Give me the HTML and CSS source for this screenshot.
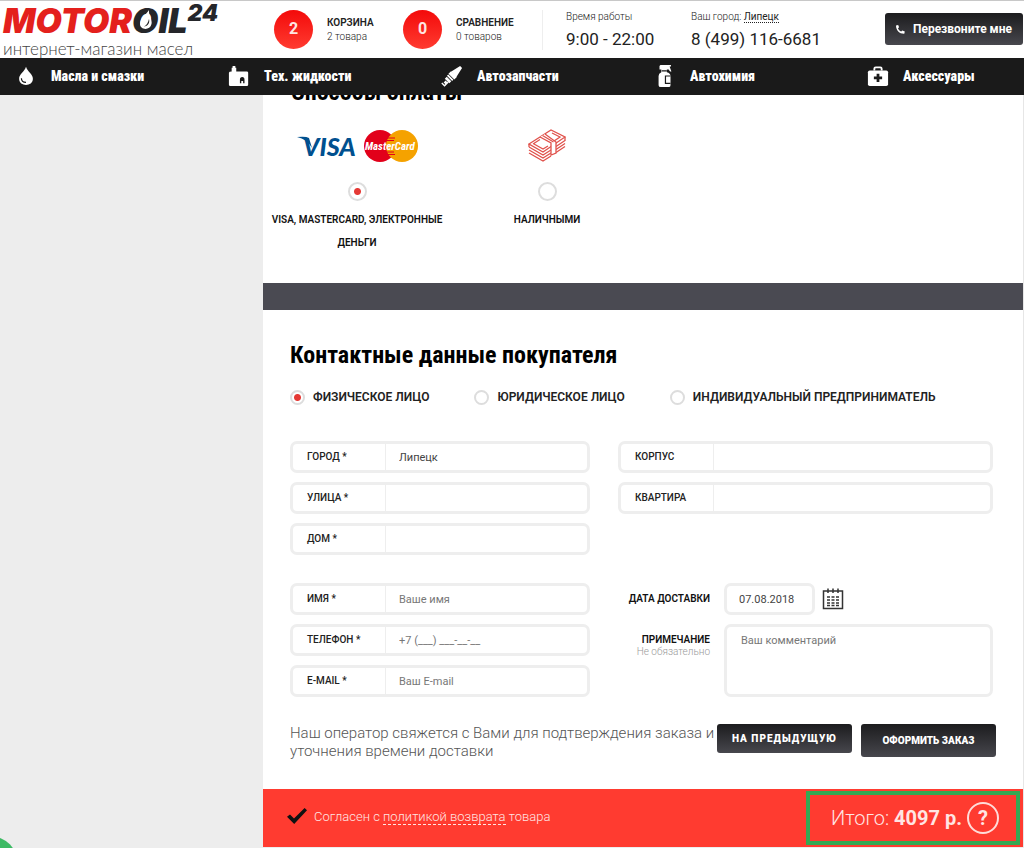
FILE: index.html
```html
<!DOCTYPE html>
<html lang="ru">
<head>
<meta charset="utf-8">
<meta name="viewport" content="width=device-width, initial-scale=1">
<title>MOTOROIL24 — оформление заказа</title>
<link rel="stylesheet" href="styles.css">
</head>
<body>
<header class="header">
  <div class="topbar">
    <a class="logo" href="#">
      <span class="logo-name"><span class="logo-red">MOTOR</span><span class="logo-drop">O<svg viewBox="0 0 14 20" aria-hidden="true"><path d="M10 0C7 5 1 8 1 14c0 6 10 7 11.500 0C13.500 9 9.500 6 10 0z" fill="#fff"/><path d="M10 9c1 4-1 7-5 7.500 3-1.500 4-4 5-7.500z" fill="#222"/></svg></span><span>IL</span><span class="logo-num">24</span></span>
      <span class="logo-tag">интернет-магазин масел</span>
    </a>
    <a class="counter" href="#"><span class="badge">2</span><span class="counter-text"><b>КОРЗИНА</b><small>2 товара</small></span></a>
    <a class="counter" href="#"><span class="badge">0</span><span class="counter-text"><b>СРАВНЕНИЕ</b><small>0 товаров</small></span></a>
    <div class="info info-hours"><small>Время работы</small><span>9:00 - 22:00</span></div>
    <div class="info"><small>Ваш город: <a href="#">Липецк</a></small><span>8 (499) 116-6681</span></div>
    <button class="btn callback" type="button"><svg width="9" height="9" viewBox="0 0 10 10" aria-hidden="true"><path d="M0 .6 2.400 0l1 2.600-1.200 1c.6 1.600 1.800 2.800 3.600 3.700l1.200-1.200L9.800 7.200 9.200 9.800C4 10 0 6 0 .6z" fill="#fff"/></svg>Перезвоните мне</button>
  </div>
  <nav class="nav">
    <a href="#"><svg viewBox="0 0 24 24" aria-hidden="true"><path d="M12 2C10 8 4.500 10 4.500 15c0 9 15 9 15 0C19.500 10 14 8 12 2z" fill="#fff"/><path d="M7 14.500c0 3 2 4.500 5 4.500" fill="none" stroke="#1a1a1a" stroke-width="1.300"/></svg>Масла и смазки</a>
    <a href="#"><svg viewBox="0 0 24 24" aria-hidden="true"><path d="M4 7V3h1V1h3v2h1v4h11.500q1.500 0 1.500 1.500v13q0 1.500-1.500 1.500h-18Q1 23 1 21.500v-13Q1 7 4 7z" fill="#fff"/><path d="M13 20v-4q0-3 2.500-3t2.500 3v4h-1.500v-2.500h-2V20z" fill="#1a1a1a"/></svg>Тех. жидкости</a>
    <a href="#"><svg viewBox="0 0 24 24" aria-hidden="true"><g transform="rotate(45 12 12)" fill="#fff"><path d="M10.500-2h3L16 9H8zM7.500 9h9v4h-9zM8 13.800h8v2H8zM8.500 16.600h7v3h-7zM10.500 20.400h3v3h-3z"/><path d="M13 24.500v-5h1.500V26h-5v-1.500z"/></g></svg>Автозапчасти</a>
    <a href="#"><svg viewBox="0 0 24 24" aria-hidden="true"><path d="M7 0h11.500v1.500H17L19 7h-1.500L16 5h-2v3q4 1 4 4v10q0 2-2 2H7.500q-2.500 0-2.500-2V12q0-3 3-4V5H6V1z" fill="#fff"/><path d="M18 12h-5.500v8H18M8.500 6.500H14" fill="none" stroke="#1a1a1a" stroke-width="1.300"/></svg>Автохимия</a>
    <a href="#"><svg viewBox="0 0 24 24" aria-hidden="true"><path d="M8 6V4q0-1.500 1.500-1.500h5Q16 2.500 16 4v2" fill="none" stroke="#fff" stroke-width="2"/><rect x="1" y="6" width="22" height="17" rx="2" fill="#fff"/><path d="M12 9.500v9M7.500 14h9" stroke="#1a1a1a" stroke-width="3"/></svg>Аксессуары</a>
  </nav>
</header>
<main class="page">
  <form class="checkout">
    <section class="pay">
      <h2>Способы оплаты</h2>
      <div class="pay-list">
        <label class="pay-item">
          <span class="pay-logo">
            <svg width="122" height="36" viewBox="0 0 122 36" role="img" aria-label="Visa, MasterCard">
              <text class="visa" x="7" y="28">VISA</text>
              <path d="M1 9q9-1 12 1l3 10Q11 11 1 9z" fill="#00508f"/>
              <circle cx="84" cy="18" r="16" fill="#e2001a"/><circle cx="106" cy="18" r="16" fill="#f5a200"/>
              <path d="M91 10h8M90 12.500h8M90 24h8M91 26.500h8" stroke="#e2001a"/>
              <text class="mc" x="69" y="22">MasterCard</text>
            </svg>
          </span>
          <input type="radio" name="pay" checked>
          <span>VISA, MASTERCARD, ЭЛЕКТРОННЫЕ ДЕНЬГИ</span>
        </label>
        <label class="pay-item">
          <span class="pay-logo">
            <svg width="38" height="34" viewBox="0 0 38 34" fill="none" stroke="#e0524c" stroke-width="1.300" aria-hidden="true">
              <path d="M1 15 23 1l14 7-22 15z"/><path d="M5 15 12 10.500M20 17l-5 3-9-5M24 4l8 4-6 4"/>
              <path d="m1 18 14 8 8-5M1 21l14 8 8-5M1 24l14 8 8-5M1 15v3M28 17.500l9-6M28 20.500l9-6M28 23.500l9-6M37 8v4"/>
              <path d="m12 8 11 6v12l5-2V13L17 5" fill="#fff"/><path d="m14.500 6.500 11 6.500"/>
            </svg>
          </span>
          <input type="radio" name="pay">
          <span>НАЛИЧНЫМИ</span>
        </label>
      </div>
    </section>
    <section class="buyer">
      <h2>Контактные данные покупателя</h2>
      <div class="types">
        <label><input type="radio" name="type" checked>ФИЗИЧЕСКОЕ ЛИЦО</label>
        <label><input type="radio" name="type">ЮРИДИЧЕСКОЕ ЛИЦО</label>
        <label><input type="radio" name="type">ИНДИВИДУАЛЬНЫЙ ПРЕДПРИНИМАТЕЛЬ</label>
      </div>
      <div class="columns">
        <div class="stack">
          <label class="field"><span>ГОРОД *</span><input type="text" value="Липецк"></label>
          <label class="field"><span>УЛИЦА *</span><input type="text"></label>
          <label class="field"><span>ДОМ *</span><input type="text"></label>
        </div>
        <div class="stack">
          <label class="field"><span>КОРПУС</span><input type="text"></label>
          <label class="field"><span>КВАРТИРА</span><input type="text"></label>
        </div>
        <div class="stack">
          <label class="field"><span>ИМЯ *</span><input type="text" placeholder="Ваше имя"></label>
          <label class="field"><span>ТЕЛЕФОН *</span><input type="tel" placeholder="+7 (___) ___-__-__"></label>
          <label class="field"><span>E-MAIL *</span><input type="email" placeholder="Ваш E-mail"></label>
        </div>
        <div class="delivery">
          <label class="side-label" for="date">ДАТА ДОСТАВКИ</label>
          <div class="date-row">
            <input class="box date" id="date" type="text" value="07.08.2018">
            <button class="calendar" type="button" aria-label="Открыть календарь"><svg width="22" height="22" viewBox="0 0 22 22" fill="none" stroke="#333" aria-hidden="true"><rect x="1.500" y="3" width="19" height="17.500" stroke-width="1.500"/><path d="M6 .5v4.500M11 .5v4.500M16 .5v4.500" stroke-width="1.500"/><path d="M5 9h3M9.500 9h3M14 9h3M5 12h3M9.500 12h3M14 12h3M5 15h3M9.500 15h3M14 15h3M9.500 17.500h3M5 17.500h3M14 17.500h3" stroke-width="1.300"/></svg></button>
          </div>
          <label class="side-label" for="note">ПРИМЕЧАНИЕ<small>Не обязательно</small></label>
          <textarea class="box note" id="note" placeholder="Ваш комментарий"></textarea>
        </div>
      </div>
      <div class="actions">
        <p>Наш оператор свяжется с Вами для подтверждения заказа и уточнения времени доставки</p>
        <button class="btn back" type="button">НА ПРЕДЫДУЩУЮ</button>
        <button class="btn submit" type="submit">ОФОРМИТЬ ЗАКАЗ</button>
      </div>
    </section>
    <footer class="total-bar">
      <div class="agree">
        <input id="agree" type="checkbox" checked>
        <p><label for="agree">Согласен с</label> <a href="#">политикой возврата</a> товара</p>
      </div>
      <div class="total"><span>Итого: <b>4097 р.</b></span><button class="help" type="button">?</button></div>
    </footer>
  </form>
</main>
<button class="chat" type="button" aria-label="Чат"></button>
</body>
</html>
```
FILE: styles.css
```css
* { box-sizing: border-box; }
body { margin: 0; background: #ededed; color: #222; font-family: Roboto, sans-serif; font-size: 12px; }
a { color: inherit; text-decoration: none; }
button, input, textarea { font: inherit; color: inherit; }
button { cursor: pointer; }
h2 { margin: 0; color: #000; font: 700 24px/28px "Roboto Condensed", "Liberation Sans Narrow", Roboto, sans-serif; }

.header { position: sticky; top: 0; z-index: 2; background: #fff; border-top: 1px solid #c8c8c8; }
.topbar { display: grid; grid-template-columns: 271px 129px 139px 149px 1fr auto; height: 57px; padding-left: 3px; align-items: center; }
.logo { display: flex; flex-direction: column; align-self: start; color: #25262a; white-space: nowrap; }
.logo-name { display: flex; height: 38px; font: italic 900 34px/40px Inter, sans-serif; }
.logo-red { color: #e4201c; }
.logo-drop { position: relative; }
.logo-drop svg { position: absolute; left: 7px; top: 9px; width: 14px; height: 20px; }
.logo-num { font-size: 23px; line-height: 24px; }
.logo-tag { color: #444; font: 300 17px/20px Lato, sans-serif; }
.counter { display: flex; align-items: center; gap: 14px; }
.badge { width: 39px; height: 39px; border-radius: 50%; background: linear-gradient(#f30a0a, #ff3b30); color: #ffe5e3; font: 700 16px/37px Roboto, sans-serif; text-align: center; }
.counter-text { display: grid; line-height: 14px; }
.counter-text b { font-size: 10px; font-weight: 600; }
.counter-text small { font-size: 10px; font-weight: 300; }
.counter { margin-top: -1px; }
.info { display: grid; gap: 4px; }
.info small { font-size: 10px; line-height: 14px; font-weight: 300; }
.info small a { font-weight: 400; border-bottom: 1px dotted #222; }
.info span { font-size: 17px; line-height: 22px; }
.info-hours { padding-left: 23px; border-left: 1px solid #eee; margin-right: 24px; }
.btn { border: 0; border-radius: 3px; background: linear-gradient(#1c1c1e, #47474d); color: #fff; font-weight: 900; }
.callback { display: flex; align-items: center; gap: 8px; height: 32px; padding: 0 11px; margin: -2px 1px 0 0; font-size: 12px; font-weight: 700; }
.nav { display: grid; grid-template-columns: repeat(4, 213fr) 172fr; height: 37px; padding-bottom: 1px; background: #1a1a1a; color: #fff; font: 900 14px/36px "Roboto Condensed", "Liberation Sans Narrow", Roboto, sans-serif; }
.nav a { display: flex; align-items: center; gap: 14px; padding-left: 15px; white-space: nowrap; }
.nav svg { width: 22px; height: 22px; overflow: visible; }

.page { margin-top: -17px; padding-left: 263px; }
.checkout { border-right: 1px solid #e6e6e6; background: #fff; }
.pay { height: 232px; padding-left: 28px; border-bottom: 27px solid #4a4a52; }
.pay-list { display: flex; margin: 22px 0 0 -29px; }
.pay-item { display: flex; flex-direction: column; align-items: center; width: 190px; color: #111; font-size: 10px; font-weight: 600; line-height: 23px; text-align: center; }
.pay-logo { display: flex; align-items: center; height: 36px; }
.pay-item input { margin: 18px 0 7px; width: 19px; height: 19px; }
input[type="radio"] { appearance: none; border: 2px solid #ddd; border-radius: 50%; background: #fff; }
input[type="radio"]:checked { background: radial-gradient(circle, #e53935 3px, #fff 4px); }
.visa { fill: #00508f; font: italic 900 25px Lato, sans-serif; }
.mc { fill: #fff; font: italic 700 11px "Roboto Condensed", sans-serif; }

.buyer { padding: 31px 30px 0 27px; }
.types { display: flex; gap: 45px; margin: 20px 0 36px; font-size: 12px; font-weight: 600; line-height: 16px; white-space: nowrap; }
.types label { display: flex; align-items: center; gap: 8px; }
.types input { width: 15px; height: 15px; margin: 0; }
.columns { display: grid; grid-template-columns: 300fr 375fr; gap: 28px; }
.stack { display: flex; flex-direction: column; gap: 9px; }
.field, .box { border: 3px solid #eee; border-radius: 7px; background: #fff; }
.field { display: flex; height: 32px; font-size: 10px; font-weight: 500; }
.field span { flex: 0 0 93px; padding-left: 14px; border-right: 1px solid #eee; line-height: 25px; }
.field input { flex: 1; min-width: 0; padding: 1px 13px 0; border: 0; background: none; color: #444; font-size: 11px; font-weight: 400; }
::placeholder { color: #777; opacity: 1; }
.delivery { display: grid; grid-template-columns: 92px 1fr; gap: 9px 14px; }
.side-label { padding-top: 9px; color: #111; font-weight: 600; font-size: 10px; line-height: 13px; text-align: right; white-space: nowrap; }
.side-label small { display: block; color: #999; font-size: 10px; line-height: 12px; font-weight: 300; }
.date-row { display: flex; align-items: center; gap: 7px; }
.box { font-size: 11px; }
.date { width: 91px; height: 32px; padding: 1px 12px 0; color: #444; }
.calendar { display: flex; padding: 0; border: 0; background: none; }
.note { display: block; width: 100%; height: 73px; padding: 7px 14px; resize: none; }
.actions { display: flex; align-items: flex-start; gap: 9px; margin: 27px -3px 0 0; padding-bottom: 29px; }
.actions p { flex: 1; margin: 0 -8px 0 0; color: #555; font-size: 15px; font-weight: 300; line-height: 18px; }
.actions .btn { flex: none; width: 135px; padding: 0; font-size: 10px; }
.back { height: 29px; letter-spacing: 1px; }
.submit { height: 33px; }

.total-bar { display: flex; justify-content: space-between; align-items: center; height: 58px; margin-bottom: 1px; padding: 2px 3px 2px 24px; background: #ff3b30; color: #ffe5e3; }
.agree { display: flex; align-items: center; gap: 7px; font-size: 13px; font-weight: 300; }
.agree p { margin: 0 0 4px; }
.agree a { border-bottom: 1px dashed #ffe5e3; }
.agree input { appearance: none; width: 20px; height: 16px; margin: 0 0 4px; background: #111; clip-path: polygon(0 55%, 15% 40%, 35% 65%, 88% 0, 100% 14%, 36% 100%); }
.total { display: flex; align-items: center; gap: 5px; height: 54px; padding: 0 17px 0 21px; border: 4px solid #34a853; font-size: 20px; font-weight: 300; }
.total b { font-weight: 700; }
.help { width: 32px; height: 32px; padding: 0; border: 2px solid #ffdcd9; border-radius: 50%; background: none; font-size: 20px; font-weight: 700; }
.chat { position: fixed; left: -38px; bottom: -44px; width: 56px; height: 56px; border: 0; border-radius: 50%; background: #3dba64; }
```
